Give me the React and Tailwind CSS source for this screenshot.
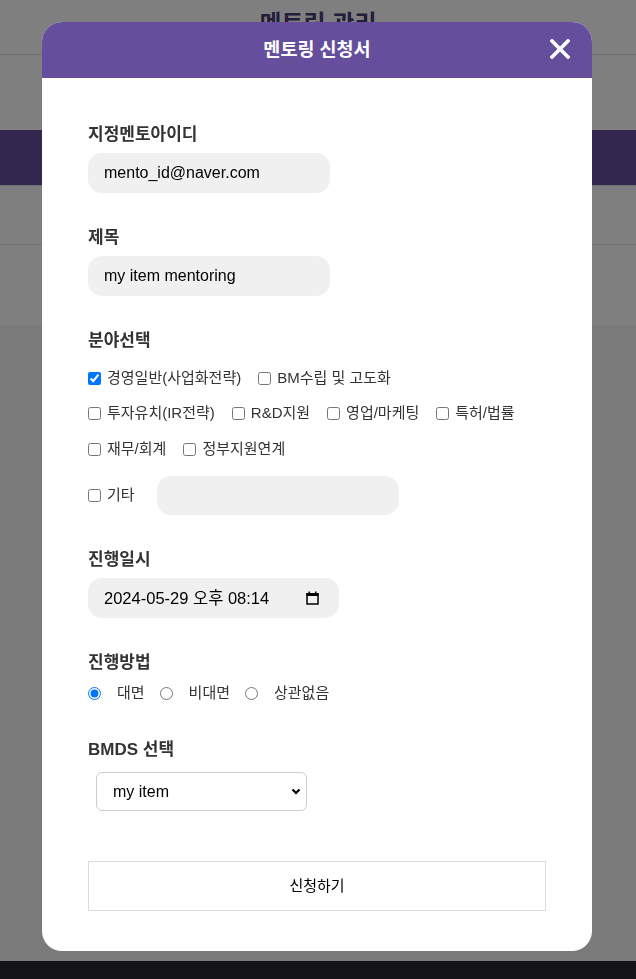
import { useState } from "react"

const fields = [
    ["경영일반(사업화전략)", "BM수립 및 고도화"],
    ["투자유치(IR전략)", "R&D지원", "영업/마케팅", "특허/법률"],
    ["재무/회계", "정부지원연계"],
]

function CalendarIcon() {
    return (
        <svg width="13" height="14" viewBox="0 0 13 14" className="shrink-0">
            <rect x="1" y="2.75" width="11" height="10.25" fill="none" stroke="#000" strokeWidth="1.5" />
            <rect x="0.5" y="2" width="12" height="3" fill="#000" />
            <rect x="2.5" y="0.5" width="1.5" height="2" fill="#000" />
            <rect x="9" y="0.5" width="1.5" height="2" fill="#000" />
        </svg>
    )
}

export default function App() {
    const [checked, setChecked] = useState({ "경영일반(사업화전략)": true })
    const [method, setMethod] = useState("대면")

    const toggle = (name) => setChecked({ ...checked, [name]: !checked[name] })

    return (
        <div className="relative min-h-[979px] flex flex-col bg-[#f4f4f4] font-['Liberation_Sans','Noto_Sans_CJK_KR',sans-serif]">
            {/* page behind the modal */}
            <header className="h-[55px] bg-white border-b border-[#dcdcdc] flex justify-center pt-[8px]">
                <h1 className="text-[24px] leading-[32px] font-bold text-[#4a3a78]">멘토링 관리</h1>
            </header>
            <div className="h-[75px] bg-white" />
            <div className="h-[56px] bg-[#664c9e] border-b border-[#dcdcdc]" />
            <div className="h-[59px] bg-white border-b border-[#dcdcdc]" />
            <div className="h-[80px] bg-white" />
            <div className="flex-1" />
            <footer className="h-[18px] bg-[#28282c]" />

            {/* modal */}
            <div className="fixed inset-0 bg-black/50 flex justify-start items-start pt-[22px] pl-[42px]">
                <div className="w-[550px] bg-white rounded-[20px] overflow-hidden">
                    <div className="h-14 bg-[#654f9d] relative flex items-center justify-center">
                        <h2 className="text-[18.5px] font-bold text-white">멘토링 신청서</h2>
                        <button className="absolute right-[22px] top-[17px]">
                            <svg width="20" height="20" viewBox="0 0 20 20">
                                <path d="M2 2 L18 18 M18 2 L2 18" stroke="#fff" strokeWidth="3.6" strokeLinecap="square" />
                            </svg>
                        </button>
                    </div>

                    <div className="px-[46px] pt-[45px] pb-[40px] flex flex-col">
                        <label className="text-[17px] leading-6 font-bold text-[#333]">지정멘토아이디</label>
                        <input
                            defaultValue="mento_id@naver.com"
                            className="mt-[6px] w-[242px] h-10 px-4 rounded-[14px] bg-[#f0f0f0] text-base text-black outline-none"
                        />

                        <label className="mt-[33px] text-[17px] leading-6 font-bold text-[#333]">제목</label>
                        <input
                            defaultValue="my item mentoring"
                            className="mt-[6px] w-[242px] h-10 px-4 rounded-[14px] bg-[#f0f0f0] text-base text-black outline-none"
                        />

                        <label className="mt-[33px] text-[17px] leading-6 font-bold text-[#333]">분야선택</label>
                        {fields.map((row, i) => (
                            <div key={i} className={`flex items-center gap-x-[17px] h-5 text-[15px] text-[#333] ${i === 2 ? "mt-4" : "mt-[15px]"}`}>
                                {row.map((name) => (
                                    <label key={name} className="flex items-center gap-[6px]">
                                        <input
                                            type="checkbox"
                                            checked={!!checked[name]}
                                            onChange={() => toggle(name)}
                                            className="m-0 w-[13px] h-[13px]"
                                        />
                                        <span>{name}</span>
                                    </label>
                                ))}
                            </div>
                        ))}
                        <div className="mt-[17px] flex items-center text-[15px] text-[#333]">
                            <label className="flex items-center gap-[6px]">
                                <input
                                    type="checkbox"
                                    checked={!!checked["기타"]}
                                    onChange={() => toggle("기타")}
                                    className="m-0 w-[13px] h-[13px]"
                                />
                                <span>기타</span>
                            </label>
                            <input className="ml-[22px] w-[242px] h-[39px] px-4 rounded-[14px] bg-[#f0f0f0] outline-none" />
                        </div>

                        <label className="mt-[33px] text-[17px] leading-6 font-bold text-[#333]">진행일시</label>
                        <div className="mt-[6px] w-[251px] h-10 pl-4 pr-5 rounded-[14px] bg-[#f0f0f0] flex items-center justify-between text-[16.5px] text-black">
                            <span>2024-05-29 오후 08:14</span>
                            <CalendarIcon />
                        </div>

                        <label className="mt-[33px] text-[17px] leading-6 font-bold text-[#333]">진행방법</label>
                        <div className="mt-2 h-5 flex items-center text-[15px] text-[#333]">
                            {["대면", "비대면", "상관없음"].map((m) => (
                                <label key={m} className="flex items-center mr-[15px]">
                                    <input
                                        type="radio"
                                        name="method"
                                        checked={method === m}
                                        onChange={() => setMethod(m)}
                                        className="m-0 w-[13px] h-[13px]"
                                    />
                                    <span className="ml-4">{m}</span>
                                </label>
                            ))}
                        </div>

                        <label className="mt-[35px] text-[17px] leading-6 font-bold text-[#333]">BMDS 선택</label>
                        <div className="mt-[10px] ml-2 relative w-[211px]">
                            <select className="appearance-none w-full h-[39px] pl-4 pr-8 rounded-md border border-[#ccc] bg-white text-base text-black outline-none">
                                <option>my item</option>
                            </select>
                            <svg width="10" height="7" viewBox="0 0 10 7" className="absolute right-[6px] top-4 pointer-events-none">
                                <path d="M1.5 1.5 L5 5 L8.5 1.5" fill="none" stroke="#000" strokeWidth="2.2" />
                            </svg>
                        </div>

                        <button className="mt-[50px] h-[50px] w-full border border-[#ddd] bg-white text-[15px] text-black">
                            신청하기
                        </button>
                    </div>
                </div>
            </div>
        </div>
    )
}
